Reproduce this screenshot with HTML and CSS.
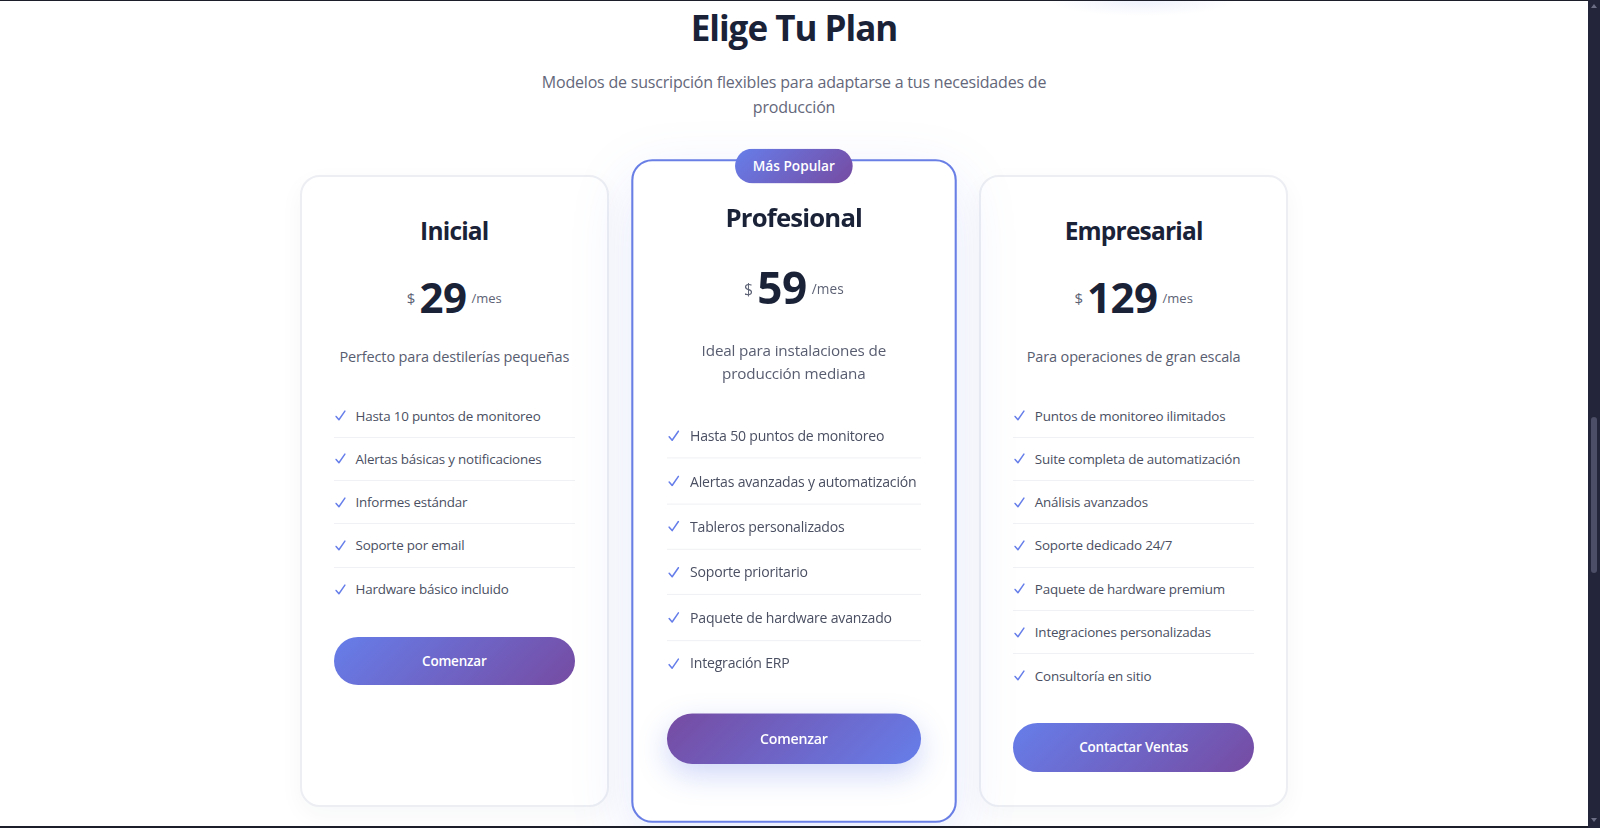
FILE: index.html
```html
<!DOCTYPE html>
<html lang="es">
<head>
<meta charset="utf-8">
<title>Elige Tu Plan</title>
<link rel="stylesheet" href="styles.css">
</head>
<body>
<div class="frame-top"></div>
<div class="frame-bottom"></div>
<div class="scrollbar">
  <span class="sb-arrow sb-up"></span>
  <span class="sb-thumb"></span>
  <span class="sb-arrow sb-down"></span>
</div>

<section class="pricing">
  <h2 class="pricing-title">Elige Tu Plan</h2>
  <p class="pricing-subtitle">Modelos de suscripción flexibles para adaptarse a tus necesidades de producción</p>

  <div class="plans">
    <div class="plan">
      <h3 class="plan-name">Inicial</h3>
      <div class="plan-price"><span class="currency">$</span><span class="amount">29</span><span class="period">/mes</span></div>
      <p class="plan-desc">Perfecto para destilerías pequeñas</p>
      <ul class="features">
        <li><svg class="check" viewBox="0 0 12 12"><path d="M1.2 7 L4.3 10.6 L10.8 1.2"/></svg>Hasta 10 puntos de monitoreo</li>
        <li><svg class="check" viewBox="0 0 12 12"><path d="M1.2 7 L4.3 10.6 L10.8 1.2"/></svg>Alertas básicas y notificaciones</li>
        <li><svg class="check" viewBox="0 0 12 12"><path d="M1.2 7 L4.3 10.6 L10.8 1.2"/></svg>Informes estándar</li>
        <li><svg class="check" viewBox="0 0 12 12"><path d="M1.2 7 L4.3 10.6 L10.8 1.2"/></svg>Soporte por email</li>
        <li><svg class="check" viewBox="0 0 12 12"><path d="M1.2 7 L4.3 10.6 L10.8 1.2"/></svg>Hardware básico incluido</li>
      </ul>
      <a class="plan-btn">Comenzar</a>
    </div>

    <div class="plan plan-featured">
      <span class="badge">Más Popular</span>
      <h3 class="plan-name">Profesional</h3>
      <div class="plan-price"><span class="currency">$</span><span class="amount">59</span><span class="period">/mes</span></div>
      <p class="plan-desc">Ideal para instalaciones de producción mediana</p>
      <ul class="features">
        <li><svg class="check" viewBox="0 0 12 12"><path d="M1.2 7 L4.3 10.6 L10.8 1.2"/></svg>Hasta 50 puntos de monitoreo</li>
        <li><svg class="check" viewBox="0 0 12 12"><path d="M1.2 7 L4.3 10.6 L10.8 1.2"/></svg>Alertas avanzadas y automatización</li>
        <li><svg class="check" viewBox="0 0 12 12"><path d="M1.2 7 L4.3 10.6 L10.8 1.2"/></svg>Tableros personalizados</li>
        <li><svg class="check" viewBox="0 0 12 12"><path d="M1.2 7 L4.3 10.6 L10.8 1.2"/></svg>Soporte prioritario</li>
        <li><svg class="check" viewBox="0 0 12 12"><path d="M1.2 7 L4.3 10.6 L10.8 1.2"/></svg>Paquete de hardware avanzado</li>
        <li><svg class="check" viewBox="0 0 12 12"><path d="M1.2 7 L4.3 10.6 L10.8 1.2"/></svg>Integración ERP</li>
      </ul>
      <a class="plan-btn">Comenzar</a>
    </div>

    <div class="plan">
      <h3 class="plan-name">Empresarial</h3>
      <div class="plan-price"><span class="currency">$</span><span class="amount">129</span><span class="period">/mes</span></div>
      <p class="plan-desc">Para operaciones de gran escala</p>
      <ul class="features">
        <li><svg class="check" viewBox="0 0 12 12"><path d="M1.2 7 L4.3 10.6 L10.8 1.2"/></svg>Puntos de monitoreo ilimitados</li>
        <li><svg class="check" viewBox="0 0 12 12"><path d="M1.2 7 L4.3 10.6 L10.8 1.2"/></svg>Suite completa de automatización</li>
        <li><svg class="check" viewBox="0 0 12 12"><path d="M1.2 7 L4.3 10.6 L10.8 1.2"/></svg>Análisis avanzados</li>
        <li><svg class="check" viewBox="0 0 12 12"><path d="M1.2 7 L4.3 10.6 L10.8 1.2"/></svg>Soporte dedicado 24/7</li>
        <li><svg class="check" viewBox="0 0 12 12"><path d="M1.2 7 L4.3 10.6 L10.8 1.2"/></svg>Paquete de hardware premium</li>
        <li><svg class="check" viewBox="0 0 12 12"><path d="M1.2 7 L4.3 10.6 L10.8 1.2"/></svg>Integraciones personalizadas</li>
        <li><svg class="check" viewBox="0 0 12 12"><path d="M1.2 7 L4.3 10.6 L10.8 1.2"/></svg>Consultoría en sitio</li>
      </ul>
      <a class="plan-btn">Contactar Ventas</a>
    </div>
  </div>
</section>
</body>
</html>
```

FILE: styles.css
```css
* { box-sizing: border-box; }

html, body {
  margin: 0;
  padding: 0;
  height: 100%;
  overflow: hidden;
}

body {
  background: #ffffff;
  font-family: "Open Sans", "Noto Sans", "Liberation Sans", sans-serif;
  color: #1a2238;
  padding-right: 12px;
}

/* browser chrome around the captured viewport */
.frame-top {
  position: fixed;
  top: 0; left: 0; right: 0;
  height: 1px;
  background: #1c1e29;
  z-index: 10;
}
.frame-bottom {
  position: fixed;
  bottom: 0; left: 0; right: 0;
  height: 2px;
  background: #1c1e29;
  z-index: 10;
}
.scrollbar {
  position: fixed;
  top: 0; right: 0; bottom: 0;
  width: 12px;
  background: #23263a;
  z-index: 11;
}
.sb-thumb {
  position: absolute;
  left: 3px;
  width: 6px;
  top: 417px;
  height: 156px;
  border-radius: 3px;
  background: #4b4e66;
}
.sb-arrow {
  position: absolute;
  left: 3px;
  width: 0; height: 0;
  border-left: 3px solid transparent;
  border-right: 3px solid transparent;
}
.sb-up { top: 4px; border-bottom: 4px solid #6b6e85; }
.sb-down { bottom: 6px; border-top: 4px solid #6b6e85; }

.pricing {
  padding-top: 7px;
  background:
    radial-gradient(ellipse 95px 16px at 1142px 0, rgba(102, 126, 234, 0.11), rgba(102, 126, 234, 0) 100%);
  min-height: 100%;
}

.pricing-title {
  margin: 0;
  text-align: center;
  font-size: 35px;
  line-height: 42px;
  font-weight: 700;
  color: #1a2238;
  letter-spacing: -1px;
}

.pricing-subtitle {
  margin: 21px auto 0;
  max-width: 520px;
  text-align: center;
  font-size: 16px;
  line-height: 24.5px;
  color: #64677a;
  letter-spacing: -0.2px;
}

.plans {
  max-width: 989px;
  margin: 56px auto 0;
  display: grid;
  grid-template-columns: repeat(3, 1fr);
  gap: 30px;
}

.plan {
  position: relative;
  background: #ffffff;
  border: 2px solid #eceef3;
  border-radius: 20px;
  padding: 37px 32px 33px;
  display: flex;
  flex-direction: column;
  box-shadow: 0 8px 24px rgba(30, 40, 80, 0.04);
}

.plan-featured {
  border-color: #6a7fe6;
  transform: scale(1.05);
  z-index: 2;
  box-shadow: 0 20px 60px rgba(102, 126, 234, 0.16);
}

.badge {
  position: absolute;
  top: -12px;
  left: 50%;
  transform: translateX(-50%);
  padding: 8px 17px;
  font-size: 13px;
  line-height: 16.8px;
  font-weight: 600;
  color: #ffffff;
  white-space: nowrap;
  border-radius: 20px;
  background: linear-gradient(135deg, #667eea 0%, #764ba2 100%);
}

.plan-name {
  margin: 0;
  text-align: center;
  font-size: 24.5px;
  line-height: 33.6px;
  font-weight: 700;
  color: #1a2238;
  letter-spacing: -0.8px;
}

.plan-price {
  margin-top: 28px;
  display: flex;
  justify-content: center;
  align-items: flex-start;
  gap: 4px;
  height: 42px;
}
.currency {
  margin-top: 14px;
  font-size: 15px;
  line-height: 16px;
  color: #5d6275;
}
.amount {
  font-size: 42px;
  line-height: 42px;
  font-weight: 700;
  color: #1a2238;
  letter-spacing: -0.5px;
}
.period {
  margin-top: 15px;
  font-size: 13px;
  line-height: 14px;
  color: #5d6275;
  margin-left: 1px;
}

.plan-desc {
  margin: 28px 0 0;
  text-align: center;
  font-size: 14.5px;
  line-height: 22.8px;
  color: #585d70;
  letter-spacing: -0.15px;
}

.features {
  list-style: none;
  margin: 26px 0 0;
  padding: 0;
}
.features li {
  display: flex;
  align-items: center;
  height: 43.3px;
  font-size: 13.4px;
  color: #4a4f62;
  border-bottom: 1px solid #f0f1f4;
  letter-spacing: -0.2px;
  white-space: nowrap;
}
.features li:last-child { border-bottom: none; }

.check {
  width: 11px;
  height: 11px;
  margin: 0 10px 0 1px;
  flex: none;
  fill: none;
  stroke: #667eea;
  stroke-width: 1.6;
  stroke-linecap: round;
  stroke-linejoin: round;
}

.plan-btn {
  display: block;
  margin-top: 26px;
  height: 48.5px;
  line-height: 48.5px;
  text-align: center;
  border-radius: 25px;
  font-size: 13.5px;
  font-weight: 600;
  color: #ffffff;
  letter-spacing: -0.2px;
  background: linear-gradient(135deg, #667eea 0%, #764ba2 100%);
  cursor: pointer;
}

.plan-featured .plan-btn {
  background: linear-gradient(135deg, #764ba2 0%, #667eea 100%);
  box-shadow: 0 10px 28px rgba(102, 126, 234, 0.32);
}
```
